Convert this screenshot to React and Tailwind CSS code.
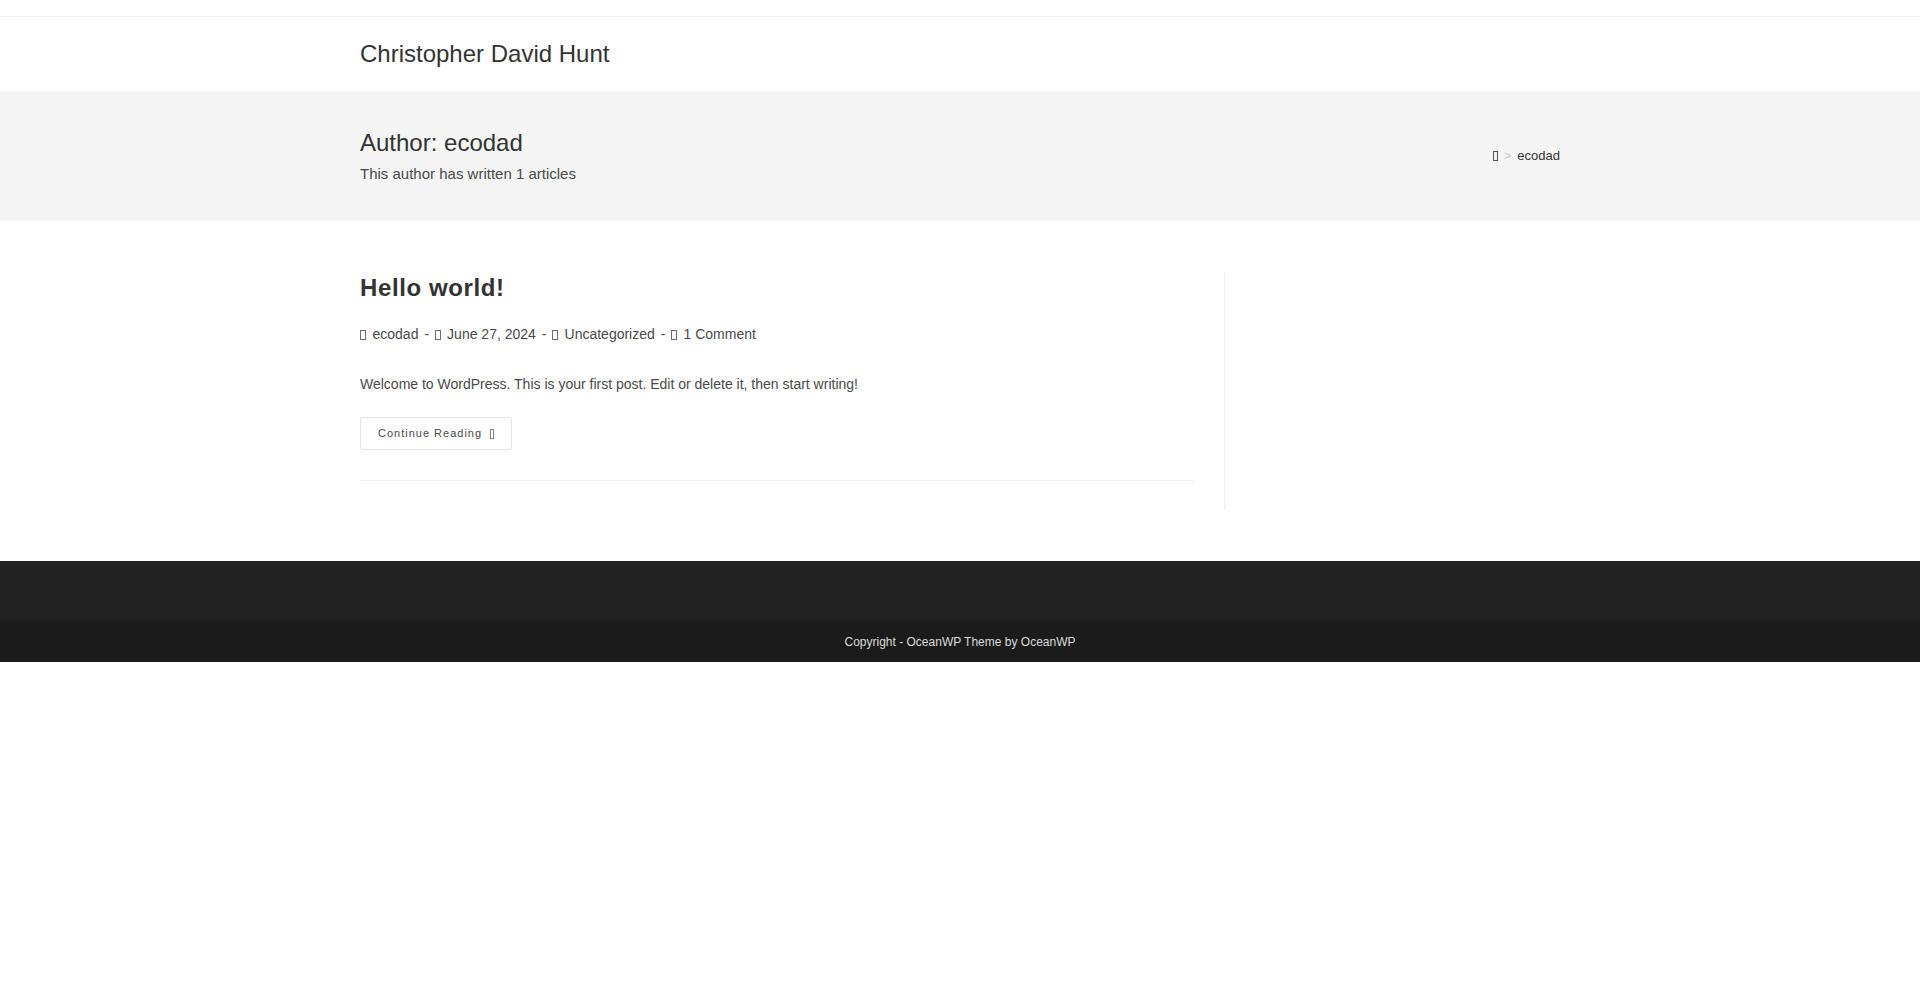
import React from "react";

// missing icon-font glyphs render as empty boxes in the reference
function Tofu({ className = "" }) {
  return <span className={"inline-block h-[10px] border border-current " + className}></span>;
}

function MetaItem({ children, last }) {
  return (
    <li className="flex items-center">
      <Tofu className="w-[6px] mr-[6.5px] opacity-80" />
      <span>{children}</span>
      {!last && <span className="pl-[6px] pr-[5.5px]">-</span>}
    </li>
  );
}

export default function App() {
  return (
    <div className="min-h-screen bg-white font-['Liberation_Sans',Arial,sans-serif] text-[#333]">
      <div className="h-[17px] border-b border-[#f1f1f1]"></div>

      <header className="h-[74px] flex items-center">
        <div className="w-[1200px] mx-auto">
          <a className="text-[24px] leading-[34px] text-[#333]">Christopher David Hunt</a>
        </div>
      </header>

      <section className="bg-[#f5f5f5] pt-[35px] pb-[34px]">
        <div className="w-[1200px] mx-auto flex items-center justify-between">
          <div>
            <h1 className="text-[24px] leading-[34px] text-[#333]">Author: ecodad</h1>
            <p className="text-[15px] leading-[27px] text-[#4a4a4a]">This author has written 1 articles</p>
          </div>
          <nav className="flex items-center pb-[2px] text-[13px] leading-[20px]">
            <Tofu className="w-[5px] text-[#555]" />
            <span className="px-[6px] text-[#c6c6c6]">&gt;</span>
            <span className="text-[#333]">ecodad</span>
          </nav>
        </div>
      </section>

      <main className="pt-[50px] pb-[51px]">
        <div className="w-[1200px] mx-auto flex">
          <div className="w-[864px] pr-[30px]">
            <article className="pb-[30px] border-b border-[#f1f1f1] mb-[29px]">
              <h2 className="pt-[2px] text-[24px] leading-[30px] font-bold tracking-[0.6px] text-[#333]">Hello world!</h2>
              <ul className="mt-[19px] flex items-center text-[14px] leading-[25px] text-[#4a4a4a]">
                <MetaItem>ecodad</MetaItem>
                <MetaItem>June 27, 2024</MetaItem>
                <MetaItem>Uncategorized</MetaItem>
                <MetaItem last>1 Comment</MetaItem>
              </ul>
              <p className="mt-[24px] text-[14px] leading-[27px] text-[#4a4a4a]">
                Welcome to WordPress. This is your first post. Edit or delete it, then start writing!
              </p>
              <button className="mt-[19px] h-[33px] px-[17px] border border-[#e4e4e4] rounded-[2px] flex items-center text-[11px] tracking-[1px] text-[#4a4a4a]">
                Continue Reading
                <Tofu className="ml-[8px] h-[9px] w-[4px] opacity-70" />
              </button>
            </article>
          </div>
          <aside className="flex-1 border-l border-[#f1f1f1] pl-[30px]"></aside>
        </div>
      </main>

      <footer>
        <div className="h-[60px] bg-[#222222]"></div>
        <div className="h-[41px] bg-[#1b1b1b] flex items-center justify-center text-[12px] text-[#dcdcdc]">
          Copyright - OceanWP Theme by OceanWP
        </div>
      </footer>
    </div>
  );
}
